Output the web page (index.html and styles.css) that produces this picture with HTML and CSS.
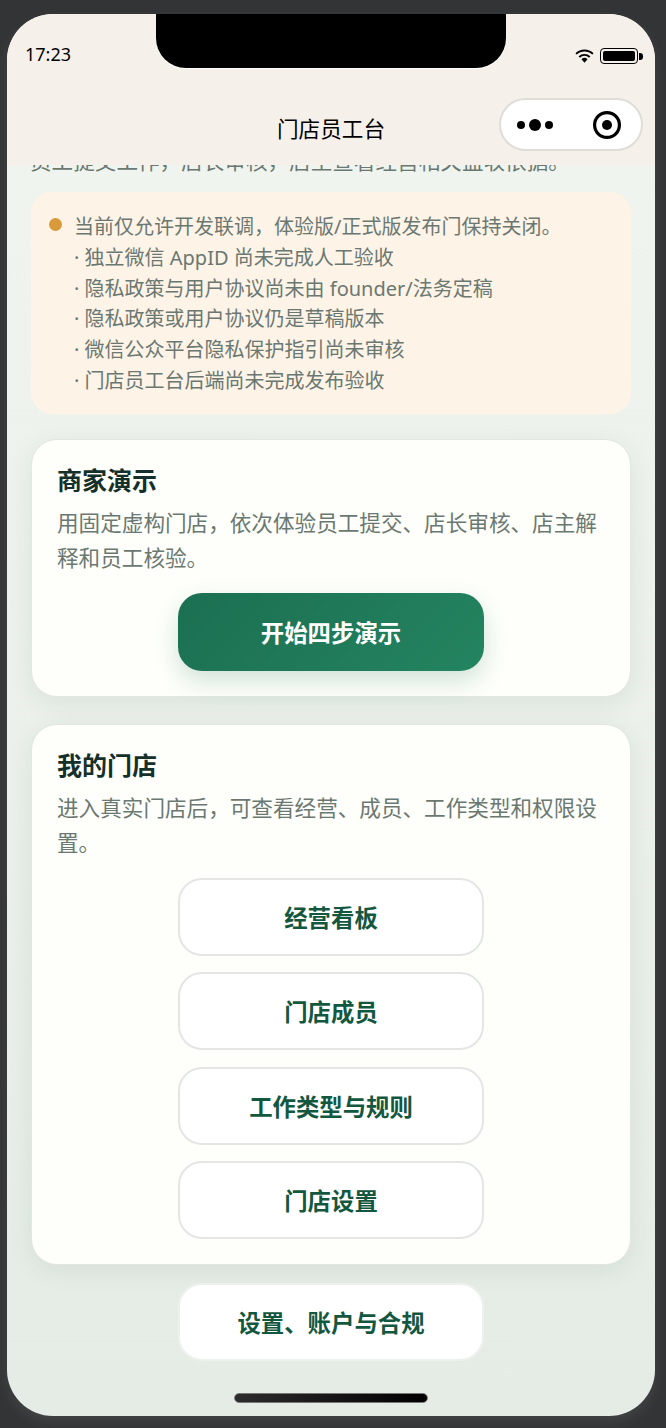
FILE: index.html
```html
<!DOCTYPE html>
<html lang="zh-CN">
<head>
    <meta charset="UTF-8">
    <meta name="viewport" content="width=device-width, initial-scale=1.0">
    <title>门店员工台</title>
    <link rel="stylesheet" href="styles.css">
</head>
<body>
    <div class="phone">
        <!-- Status bar and navigation -->
        <header class="top-bar">
            <div class="status-bar">
                <span class="time">17:23</span>
                <div class="status-icons">
                    <svg class="wifi" viewBox="0 0 20 15" width="19" height="14">
                        <path d="M1 5.2 A13 13 0 0 1 19 5.2" fill="none" stroke="#000" stroke-width="2"/>
                        <path d="M4.4 8.6 A8 8 0 0 1 15.6 8.6" fill="none" stroke="#000" stroke-width="2"/>
                        <path d="M6.8 11 L10 14.6 L13.2 11 A4.6 4.6 0 0 0 6.8 11 Z" fill="#000"/>
                    </svg>
                    <div class="battery"><span class="battery-level"></span></div>
                    <span class="battery-tip"></span>
                </div>
            </div>
            <h1 class="nav-title">门店员工台</h1>
        </header>

        <!-- Page content -->
        <main class="content">
            <p class="intro">员工提交工作，店长审核，店主查看经营相关盈收依据。</p>

            <div class="notice">
                <span class="notice-dot"></span>
                <div class="notice-text">
                    <p>当前仅允许开发联调，体验版/正式版发布门保持关闭。</p>
                    <p>· 独立微信 AppID 尚未完成人工验收</p>
                    <p>· 隐私政策与用户协议尚未由 founder/法务定稿</p>
                    <p>· 隐私政策或用户协议仍是草稿版本</p>
                    <p>· 微信公众平台隐私保护指引尚未审核</p>
                    <p>· 门店员工台后端尚未完成发布验收</p>
                </div>
            </div>

            <section class="card">
                <h2 class="card-title">商家演示</h2>
                <p class="card-desc">用固定虚构门店，依次体验员工提交、店长审核、店主解释和员工核验。</p>
                <div class="btn-list">
                    <button class="btn btn-primary">开始四步演示</button>
                </div>
            </section>

            <section class="card">
                <h2 class="card-title">我的门店</h2>
                <p class="card-desc">进入真实门店后，可查看经营、成员、工作类型和权限设置。</p>
                <div class="btn-list">
                    <button class="btn">经营看板</button>
                    <button class="btn">门店成员</button>
                    <button class="btn">工作类型与规则</button>
                    <button class="btn">门店设置</button>
                </div>
            </section>

            <div class="btn-list footer-actions">
                <button class="btn btn-plain">设置、账户与合规</button>
            </div>
        </main>

        <!-- Overlays -->
        <div class="notch"></div>
        <div class="capsule">
            <svg viewBox="0 0 36 12" width="36" height="12">
                <circle cx="4" cy="6" r="4" fill="#000"/>
                <circle cx="18" cy="6" r="6" fill="#000"/>
                <circle cx="32" cy="6" r="4" fill="#000"/>
            </svg>
            <svg viewBox="0 0 30 30" width="30" height="30">
                <circle cx="15" cy="15" r="12.4" fill="none" stroke="#000" stroke-width="3.2"/>
                <circle cx="15" cy="15" r="5" fill="#000"/>
            </svg>
        </div>
        <div class="home-bar"></div>
    </div>
</body>
</html>
```

FILE: styles.css
```css
/* --- Page --- */
* {
    box-sizing: border-box;
}

body {
    margin: 0;
    width: 666px;
    height: 1428px;
    padding: 14px 11px 12px 7px;
    background: #333436;
    font-family: "Noto Sans", "Noto Sans CJK SC", sans-serif;
    overflow: hidden;
}

.phone {
    position: relative;
    width: 648px;
    height: 1402px;
    border-radius: 46px;
    overflow: hidden;
    display: flex;
    flex-direction: column;
    background: linear-gradient(180deg, #f1f5f0 0%, #e5ece5 100%);
    box-shadow: 0 6px 14px rgba(255, 255, 255, 0.08);
}

/* --- Status Bar and Navigation --- */
.top-bar {
    height: 151px;
    flex-shrink: 0;
    background: #f5f0ea;
    position: relative;
    z-index: 1;
}

.status-bar {
    height: 80px;
    padding: 27px 12px 0 18px;
    display: flex;
    justify-content: space-between;
    align-items: flex-start;
}

.time {
    font-size: 18px;
    line-height: 26px;
    color: #000;
}

.status-icons {
    display: flex;
    align-items: center;
    gap: 6px;
    margin-top: 7px;
}

.wifi {
    display: block;
}

.battery {
    width: 38px;
    height: 16px;
    border: 1.5px solid #000;
    border-radius: 4px;
    padding: 2px;
}

.battery-level {
    display: block;
    height: 100%;
    background: #000;
    border-radius: 2px;
}

.battery-tip {
    width: 4px;
    height: 7px;
    margin-left: -5px;
    background: #000;
    border-radius: 0 3px 3px 0;
}

.nav-title {
    margin: 19px 0 0;
    text-align: center;
    font-size: 21.6px;
    font-weight: 400;
    line-height: 32px;
    color: #000;
}

/* --- Content --- */
.content {
    flex: 1;
    padding: 0 24px;
    overflow: hidden;
}

.intro {
    margin: -22px 0 0 -1px;
    font-size: 21.6px;
    line-height: 35px;
    color: #6b7871;
    white-space: nowrap;
}

/* --- Notice --- */
.notice {
    margin-top: 14px;
    padding: 20px 18px 17px;
    display: flex;
    gap: 12px;
    background: #fdf3e7;
    border-radius: 21px;
}

.notice-dot {
    width: 13px;
    height: 13px;
    margin-top: 6px;
    flex-shrink: 0;
    background: #d99a3c;
    border-radius: 50%;
}

.notice-text p {
    margin: 0;
    font-size: 20px;
    line-height: 30.8px;
    color: #6b7871;
    white-space: nowrap;
}

/* --- Cards --- */
.card {
    margin-top: 25px;
    padding: 23px 25px 25px;
    background: #fefffb;
    border: 1px solid #e2e7e2;
    border-radius: 26px;
    box-shadow: 0 6px 26px rgba(30, 70, 50, 0.08);
}

.card + .card {
    margin-top: 27px;
}

.card-title {
    margin: 0;
    font-size: 25px;
    font-weight: 700;
    line-height: 34px;
    color: #15302a;
}

.card-desc {
    margin: 8px 0 0;
    font-size: 21.6px;
    line-height: 35px;
    color: #6b7871;
}

/* --- Buttons --- */
.btn-list {
    margin-top: 18px;
    display: flex;
    flex-direction: column;
    align-items: center;
    gap: 16.5px;
}

.footer-actions {
    margin-top: 18px;
}

.btn {
    width: 306px;
    height: 78px;
    flex-shrink: 0;
    background: #fff;
    border: 2px solid #e3e6e3;
    border-radius: 24px;
    font-family: inherit;
    font-size: 23.4px;
    font-weight: 700;
    color: #14573f;
}

.btn-primary {
    border: none;
    background: linear-gradient(135deg, #1b6f52, #248460);
    color: #fff;
    box-shadow: 0 10px 24px rgba(27, 111, 82, 0.2);
}

.btn-plain {
    border-color: #edf1ed;
}

/* --- Overlays --- */
.notch {
    position: absolute;
    top: 0;
    left: 149px;
    width: 350px;
    height: 54px;
    background: #000;
    border-radius: 0 0 30px 30px;
    box-shadow: 0 1px 0 #fff;
    z-index: 2;
}

.capsule {
    position: absolute;
    top: 84px;
    left: 492px;
    width: 144px;
    height: 53px;
    padding: 0 19px 0 16px;
    display: flex;
    align-items: center;
    justify-content: space-between;
    background: #fff;
    border: 2px solid #dfddd8;
    border-radius: 27px;
    z-index: 2;
}

.home-bar {
    position: absolute;
    left: 227px;
    bottom: 13px;
    width: 194px;
    height: 10px;
    background: linear-gradient(90deg, #2c2c2c, #000);
    border: 1px solid #777;
    border-radius: 5px;
    z-index: 2;
}
```
